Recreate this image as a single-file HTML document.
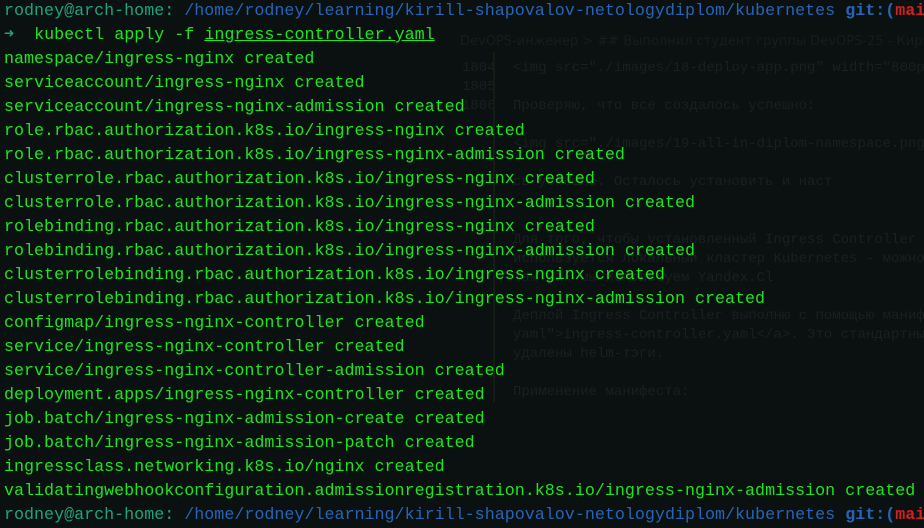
<!DOCTYPE html>
<html><head><meta charset="utf-8"><style>
html,body{margin:0;padding:0;width:924px;height:509px;overflow:hidden;background:#0b1010;}
.bg{position:absolute;left:0;top:0;width:924px;height:509px;font-family:"Liberation Mono","DejaVu Sans Mono",monospace;font-size:14px;color:#1a2020;}
.bg div{position:absolute;white-space:pre;}
.vl{position:absolute;left:493px;top:52px;width:2px;height:350px;background:#141c14;}
.term{position:absolute;left:4px;top:0;font-family:"Liberation Mono","DejaVu Sans Mono",monospace;font-size:16.7px;line-height:24px;color:#1ee61e;white-space:pre;}
.p{color:#1aa57f}.b{color:#2565b8}.gb{color:#2565b8;font-weight:bold}.r{color:#d02020;font-weight:bold}
u{text-decoration:underline;}
</style></head><body>
<div class="bg">
<div style="left:460px;top:34px;font-family:'DejaVu Sans',sans-serif;font-size:13px;color:#171d1d">DevOPS-инженер &gt; ## Выполнил студент группы DevOPS-25 - Кирилл Ш</div>
<div style="left:462px;top:60px">1804</div><div style="left:513px;top:60px">&lt;img src="./images/18-deploy-app.png" width="800px</div>
<div style="left:462px;top:79px">1805</div>
<div style="left:462px;top:98px">1806</div><div style="left:513px;top:98px">Проверяю, что все создалось успешно:</div>
<div style="left:513px;top:136px">&lt;img src="./images/19-all-in-diplom-namespace.png</div>
<div style="left:513px;top:174px">сь успешно. Осталось установить и наст</div>
<div style="left:513px;top:232px">Для того, чтобы установленный Ingress Controller</div>
<div style="left:513px;top:251px">используется локальный кластер Kubernetes - можно</div>
<div style="left:513px;top:270px">Так как мы используем Yandex.Cl</div>
<div style="left:513px;top:308px">Деплой Ingress Controller выполню с помощью маниф</div>
<div style="left:513px;top:327px">yaml"&gt;ingress-controller.yaml&lt;/a&gt;. Это стандартны</div>
<div style="left:513px;top:346px">удалены helm-тэги.</div>
<div style="left:513px;top:384px">Применение манифеста:</div>
</div>
<div class="vl"></div>
<div class="term"><span class="p">rodney@arch-home: </span><span class="b">/home/rodney/learning/kirill-shapovalov-netologydiplom/kubernetes </span><span class="gb">git:(</span><span class="r">main</span>
<span class="p">➜  </span>kubectl apply -f <u>ingress-controller.yaml</u>
namespace/ingress-nginx created
serviceaccount/ingress-nginx created
serviceaccount/ingress-nginx-admission created
role.rbac.authorization.k8s.io/ingress-nginx created
role.rbac.authorization.k8s.io/ingress-nginx-admission created
clusterrole.rbac.authorization.k8s.io/ingress-nginx created
clusterrole.rbac.authorization.k8s.io/ingress-nginx-admission created
rolebinding.rbac.authorization.k8s.io/ingress-nginx created
rolebinding.rbac.authorization.k8s.io/ingress-nginx-admission created
clusterrolebinding.rbac.authorization.k8s.io/ingress-nginx created
clusterrolebinding.rbac.authorization.k8s.io/ingress-nginx-admission created
configmap/ingress-nginx-controller created
service/ingress-nginx-controller created
service/ingress-nginx-controller-admission created
deployment.apps/ingress-nginx-controller created
job.batch/ingress-nginx-admission-create created
job.batch/ingress-nginx-admission-patch created
ingressclass.networking.k8s.io/nginx created
validatingwebhookconfiguration.admissionregistration.k8s.io/ingress-nginx-admission created
<span class="p">rodney@arch-home: </span><span class="b">/home/rodney/learning/kirill-shapovalov-netologydiplom/kubernetes </span><span class="gb">git:(</span><span class="r">main</span></div>
</body></html>
